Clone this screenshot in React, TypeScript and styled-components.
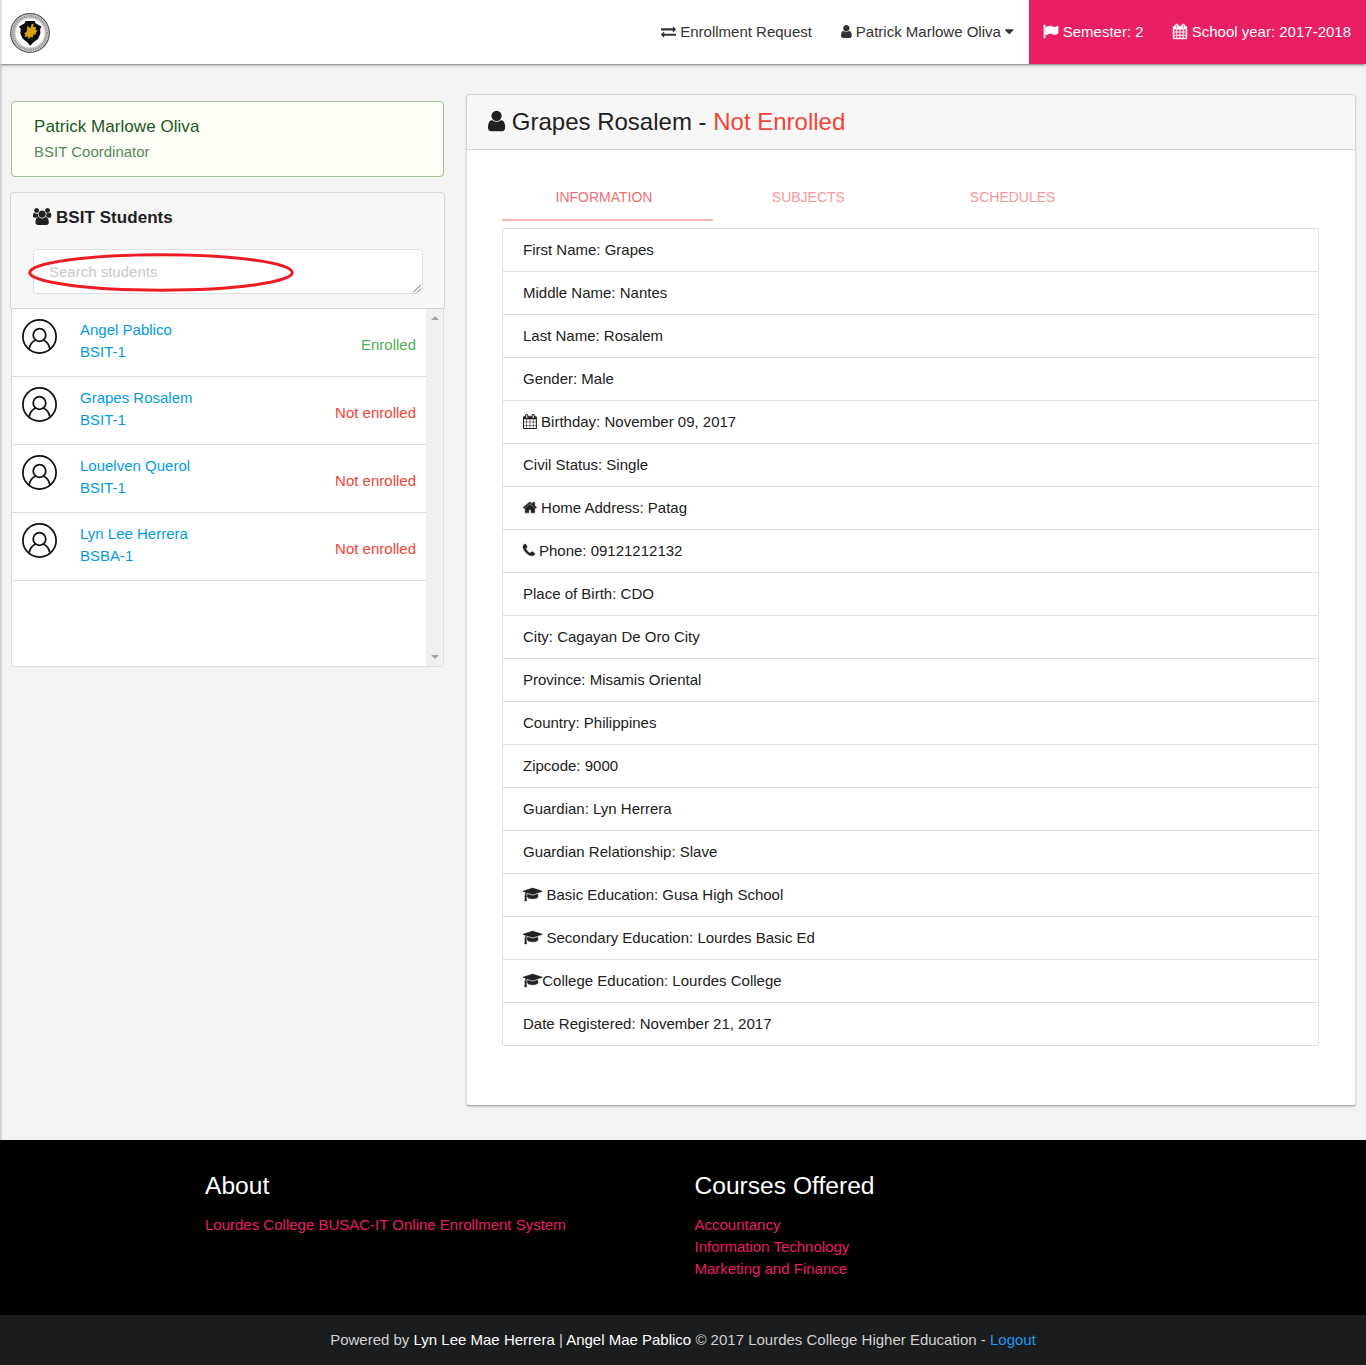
import React from 'react';
import styled, { createGlobalStyle } from 'styled-components';

const GlobalStyle = createGlobalStyle`
  *, *::before, *::after { box-sizing: border-box; }
  body {
    margin: 0;
    background: #f3f3f3;
    color: #212121;
    font: 15px/22px Arial, "Liberation Sans", sans-serif;
  }
  a { text-decoration: none; color: inherit; }
  h1, h2, h3, p, ul { margin: 0; padding: 0; font-weight: 400; }
  ul { list-style: none; }
`;

type IconName = 'user' | 'users' | 'home' | 'phone' | 'cap' | 'caret' | 'exchange' | 'calendar' | 'flag';

/* each glyph: left edge and advance width on a 1792-unit em, then its outline */
const glyphs: Record<IconName, [number, number, string]> = {
  user: [256, 1280, 'M1536 1399q0 109-62.5 187t-150.5 78h-854q-88 0-150.5-78t-62.5-187q0-85 8.5-160.5t31.5-152 58.5-131 94-89 134.5-34.5q131 128 313 128t313-128q76 0 134.5 34.5t94 89 58.5 131 31.5 152 8.5 160.5zm-256-887q0 159-112.5 271.5t-271.5 112.5-271.5-112.5-112.5-271.5 112.5-271.5 271.5-112.5 271.5 112.5 112.5 271.5z'],
  users: [-64, 1920, 'M529 896q-162 5-265 128h-134q-82 0-138-40.5t-56-118.5q0-353 124-353 6 0 43.5 21t97.5 42.5 119 21.5q67 0 133-23-5 37-5 66 0 159 93 287zm1071 637q0 120-73 189.5t-194 69.5h-874q-121 0-194-69.5t-73-189.5q0-53 3.5-103.5t14-109 26.5-108.5 43-97.5 62-81 85.5-53.5 111.5-20q10 0 43 21.5t73 48 107 48 135 21.5 135-21.5 107-48 73-48 43-21.5q61 0 111.5 20t85.5 53.5 62 81 43 97.5 26.5 108.5 14 109 3.5 103.5zm-1024-1277q0 106-75 181t-181 75-181-75-75-181 75-181 181-75 181 75 75 181zm704 384q0 159-112.5 271.5t-271.5 112.5-271.5-112.5-112.5-271.5 112.5-271.5 271.5-112.5 271.5 112.5 112.5 271.5zm576 225q0 78-56 118.5t-138 40.5h-134q-103-123-265-128 93-128 93-287 0-29-5-66 66 23 133 23 59 0 119-21.5t97.5-42.5 43.5-21q124 0 124 353zm-128-609q0 106-75 181t-181 75-181-75-75-181 75-181 181-75 181 75 75 181z'],
  home: [64, 1664, 'M1472 992v480q0 26-19 45t-45 19h-384v-384h-256v384h-384q-26 0-45-19t-19-45v-480q0-1 .5-3t.5-3l575-474 575 474q1 2 1 6zm223-69l-62 74q-8 9-21 11h-3q-13 0-21-7l-692-577-692 577q-12 8-24 7-13-2-21-11l-62-74q-8-10-7-23.5t11-21.5l719-599q32-26 76-26t76 26l244 204v-195q0-14 9-23t23-9h192q14 0 23 9t9 23v408l219 182q10 8 11 21.5t-7 23.5z'],
  phone: [192, 1408, 'M1600 1240q0 27-10 70.5t-21 68.5q-21 50-122 106-94 51-186 51-27 0-53-3.5t-57.5-12.5-47-14.5-55.5-20.5-49-18q-98-35-175-83-127-79-264-216t-216-264q-48-77-83-175-3-9-18-49t-20.5-55.5-14.5-47-12.5-57.5-3.5-53q0-92 51-186 56-101 106-122 25-11 68.5-21t70.5-10q14 0 21 3 18 6 53 76 11 19 30 54t35 63.5 31 53.5q3 4 17.5 25t21.5 35.5 7 28.5q0 20-28.5 50t-62 55-62 53-28.5 46q0 9 5 22.5t8.5 20.5 14 24 11.5 19q76 137 174 235t235 174q2 1 19 11.5t24 14 20.5 8.5 22.5 5q18 0 46-28.5t53-62 55-62 50-28.5q14 0 28.5 7t35.5 21.5 25 17.5q25 15 53.5 31t63.5 35 54 30q70 35 76 53 3 7 3 21z'],
  cap: [0, 2304, 'M1774 836l18 316q4 69-82 128t-235 93.5-323 34.5-323-34.5-235-93.5-82-128l18-316 574 181q22 7 48 7t48-7zm530-324q0 23-22 31l-1120 352q-4 1-10 1t-10-1l-652-206q-43 34-71 111.5t-34 178.5q63 36 63 109 0 69-58 107l58 433q2 14-8 25-9 11-24 11h-192q-15 0-24-11-10-11-8-25l58-433q-58-38-58-107 0-73 65-111 11-207 98-330l-333-104q-22-8-22-31t22-31l1120-352q4-1 10-1t10 1l1120 352q22 8 22 31z'],
  caret: [384, 1024, 'M1408 704q0 26-19 45l-448 448q-19 19-45 19t-45-19l-448-448q-19-19-19-45t19-45 45-19h896q26 0 45 19t19 45z'],
  exchange: [0, 1792, 'M1792 1184v192q0 13-9.5 22.5t-22.5 9.5h-1376v192q0 13-9.5 22.5t-22.5 9.5q-12 0-24-10l-319-320q-9-9-9-22 0-14 9-23l320-320q9-9 23-9 13 0 22.5 9.5t9.5 22.5v192h1376q13 0 22.5 9.5t9.5 22.5zm0-544q0 14-9 23l-320 320q-9 9-23 9-13 0-22.5-9.5t-9.5-22.5v-192h-1376q-13 0-22.5-9.5t-9.5-22.5v-192q0-13 9.5-22.5t22.5-9.5h1376v-192q0-14 9-23t23-9q12 0 24 10l319 319q9 9 9 23z'],
  calendar: [64, 1664, 'M192 1664h288v-288h-288v288zm352 0h320v-288h-320v288zm-352-352h288v-320h-288v320zm352 0h320v-320h-320v320zm-352-384h288v-288h-288v288zm736 736h320v-288h-320v288zm-384-736h320v-288h-320v288zm768 736h288v-288h-288v288zm-384-352h320v-320h-320v320zm-352-864v-288q0-13-9.5-22.5t-22.5-9.5h-64q-13 0-22.5 9.5t-9.5 22.5v288q0 13 9.5 22.5t22.5 9.5h64q13 0 22.5-9.5t9.5-22.5zm736 864h288v-320h-288v320zm-384-384h320v-288h-320v288zm384 0h288v-288h-288v288zm32-480v-288q0-13-9.5-22.5t-22.5-9.5h-64q-13 0-22.5 9.5t-9.5 22.5v288q0 13 9.5 22.5t22.5 9.5h64q13 0 22.5-9.5t9.5-22.5zm384-64v1280q0 52-38 90t-90 38h-1408q-52 0-90-38t-38-90v-1280q0-52 38-90t90-38h128v-96q0-66 47-113t113-47h64q66 0 113 47t47 113v96h384v-96q0-66 47-113t113-47h64q66 0 113 47t47 113v96h128q52 0 90 38t38 90z'],
  flag: [0, 1792, 'M320 256q0 72-64 110v1266q0 13-9.5 22.5t-22.5 9.5h-64q-13 0-22.5-9.5t-9.5-22.5v-1266q-64-38-64-110 0-53 37.5-90.5t90.5-37.5 90.5 37.5 37.5 90.5zm1472 64v763q0 25-12.5 38.5t-39.5 27.5q-215 116-369 116-61 0-123.5-22t-108.5-48-115.5-48-142.5-22q-192 0-464 146-17 9-33 9-26 0-45-19t-19-45v-742q0-32 31-55 21-14 79-43 236-120 421-120 107 0 200 29t219 88q38 19 88 19 54 0 117.5-21t110-47 88-47 54.5-21q26 0 45 19t19 45z'],
};

const Glyph = styled.svg<{ $em: number; $weight: number }>`
  width: ${p => p.$em}em;
  height: 1em;
  fill: currentColor;
  stroke: currentColor;
  stroke-width: ${p => p.$weight};
  vertical-align: -0.143em;
  overflow: visible;
`;

const Icon = ({ name, weight = 0 }: { name: IconName; weight?: number }) => {
  const [left, advance, d] = glyphs[name];
  return (
    <Glyph $em={advance / 1792} $weight={weight} viewBox={`${left} 0 ${advance} 1792`} aria-hidden="true">
      <path d={d} />
    </Glyph>
  );
};

const Page = styled.div`
  position: relative;
  width: 1366px;
  height: 1365px;
  display: flex;
  flex-direction: column;
  overflow: hidden;
`;

const EdgeShade = styled.div`
  position: absolute;
  z-index: 3;
  left: 0;
  top: 0;
  width: 3px;
  height: 1140px;
  background: linear-gradient(to right, rgba(0, 0, 0, 0.16), rgba(0, 0, 0, 0));
`;

const TopBar = styled.header`
  position: relative;
  z-index: 2;
  flex: none;
  height: 64px;
  padding-left: 10px;
  display: flex;
  align-items: center;
  justify-content: space-between;
  background: #fff;
  box-shadow: 0 2px 2px 0 rgba(0, 0, 0, 0.14), 0 1px 5px 0 rgba(0, 0, 0, 0.12), 0 3px 1px -2px rgba(0, 0, 0, 0.2);
`;

const Menu = styled.nav`
  display: flex;
  height: 64px;
  line-height: 64px;
  color: #333;
`;

const MenuItem = styled.a<{ $accent?: boolean; $tight?: boolean }>`
  padding: 0 ${p => (p.$tight ? 14 : 15)}px 0 15px;
  white-space: nowrap;
  background: ${p => (p.$accent ? '#e91e63' : 'transparent')};
  color: ${p => (p.$accent ? '#fff' : '#333')};

  svg:first-child {
    margin-left: ${p => (p.$accent ? '-0.6px' : '0')};
    margin-right: ${p => (p.$accent ? '0.6px' : '0')};
  }
`;

const Content = styled.main`
  flex: none;
  height: 1076px;
  padding: 30px 10px 0;
  display: flex;
  align-items: flex-start;
  justify-content: space-between;
`;

const Sidebar = styled.aside`
  width: 435px;
  padding-top: 7px;
`;

const Callout = styled.section`
  height: 76px;
  margin: 0 1px 15px;
  padding: 14px 22px 0;
  border: 1px solid #a3c293;
  border-radius: 4px;
  background: #fcfff5;
`;

const CalloutName = styled.h2`
  font-size: 17px;
  letter-spacing: 0.05px;
  line-height: 22px;
  color: #1e561f;
`;

const CalloutRole = styled.p`
  margin-top: 3px;
  line-height: 22px;
  color: #5a875c;
`;

const PanelHead = styled.section`
  position: relative;
  height: 117px;
  padding: 13px 22px 0;
  border: 1px solid #d4d4d5;
  border-radius: 4px 4px 0 0;
  background: #f7f7f7;
`;

const PanelTitle = styled.h2`
  font-size: 17px;
  line-height: 24px;
  font-weight: 700;
  letter-spacing: 0.05px;
`;

const SearchWrap = styled.div`
  position: relative;
  margin-top: 19px;
  height: 45px;
  width: 390px;
`;

const Search = styled.textarea`
  display: block;
  width: 100%;
  height: 100%;
  padding: 11px 15px;
  border: 1px solid #dededf;
  border-radius: 4px;
  background: #fff;
  font: inherit;
  resize: none;
  overflow: hidden;
  &::placeholder { color: #c7c7c7; opacity: 1; }
`;

const Grip = styled.svg`
  position: absolute;
  right: 1px;
  bottom: 1px;
  width: 9px;
  height: 9px;
`;

const Marker = styled.svg`
  position: absolute;
  left: 16.5px;
  top: 59.5px;
  width: 266px;
  height: 39px;
`;

const ListFrame = styled.div`
  height: 358px;
  margin: 0 1px;
  border: 1px solid #dededf;
  border-top: 0;
  border-radius: 0 0 3px 3px;
  display: flex;
  background: #fff;
`;

const Students = styled.ul`
  flex: 1;
`;

const Student = styled.li`
  height: 68px;
  padding: 10px;
  display: flex;
  border-bottom: 1px solid #dcdcdc;
  color: #039be5;
`;

const Avatar = styled.svg`
  width: 35px;
  height: 35px;
  margin-right: 23px;
`;

const Status = styled.span<{ $ok: boolean }>`
  margin: 15px 0 0 auto;
  color: ${p => (p.$ok ? '#4caf50' : '#f44336')};
`;

const Scrollbar = styled.div`
  width: 17px;
  padding: 7px 0;
  display: flex;
  flex-direction: column;
  align-items: center;
  justify-content: space-between;
  background: #f0f0f0;
`;

const Arrow = styled.i<{ $down?: boolean }>`
  border: 4px solid transparent;
  border-width: ${p => (p.$down ? '4px 4px 0' : '0 4px 4px')};
  border-${p => (p.$down ? 'top' : 'bottom')}-color: #a3a3a3;
`;

const Card = styled.section`
  width: 890px;
  height: 1012px;
  display: flex;
  flex-direction: column;
  border: 1px solid #dcdcdc;
  border-width: 0 1px 1px;
  border-bottom-color: #a9a9a9;
  border-radius: 4px 4px 3px 3px;
  background: #fff;
  box-shadow: 0 1px 2px rgba(0, 0, 0, 0.16);
`;

const CardHead = styled.header`
  height: 56px;
  margin: 0 -1px;
  padding: 13px 20px 0 21px;
  border: 1px solid #d4d4d5;
  border-radius: 4px 4px 0 0;
  background: #f7f7f7;
`;

const CardTitle = styled.h1`
  font-size: 24px;
  line-height: 28px;
`;

const Danger = styled.span`
  color: #f44336;
`;

const CardBody = styled.div`
  width: 817px;
  margin: 23px 0 0 35px;
`;

const Tabs = styled.div`
  display: grid;
  grid-template-columns: repeat(4, minmax(0, 1fr));
  height: 48px;
  margin-bottom: 7px;
`;

const Tab = styled.a<{ $active?: boolean }>`
  width: ${p => (p.$active ? '211px' : 'auto')};
  height: 48px;
  padding-right: ${p => (p.$active ? '7px' : '0')};
  border-bottom: 2px solid ${p => (p.$active ? '#f6b2b5' : 'transparent')};
  text-align: center;
  font-size: 14px;
  line-height: 48px;
  color: ${p => (p.$active ? '#ee6e73' : '#f3989b')};
`;

const Details = styled.ul`
  border: 1px solid #e0e0e0;
  border-radius: 2px;
`;

const Detail = styled.li`
  height: 43px;
  padding: 10px 20px;
  line-height: 22px;
  border-bottom: 1px solid #e0e0e0;
  &:last-child { height: 42px; border-bottom: 0; }
`;

const FooterMain = styled.footer`
  flex: none;
  height: 175px;
  padding: 30px 0 0 205px;
  display: grid;
  grid-template-columns: 489.5px 1fr;
  align-content: start;
  background: #000;
`;

const FooterTitle = styled.h3`
  margin-bottom: 13px;
  font-size: 24.6px;
  line-height: 31px;
  color: #fff;
`;

const FooterLinks = styled.ul`
  color: #e91e63;
`;

const Legal = styled.div`
  flex: none;
  height: 50px;
  line-height: 50px;
  text-align: center;
  background: #1b1c1d;
  color: #d1d1d1;
`;

const Credit = styled.b`
  font-weight: 400;
  color: #fff;
`;

const Logout = styled.a`
  color: #2196f3;
`;

const Crest = styled.svg`
  width: 40px;
  height: 40px;
  margin-top: 2px;
`;

const Logo = () => (
  <Crest viewBox="0 0 40 40" aria-hidden="true">
    <circle cx="20" cy="20" r="19.3" fill="#d6d6d6" stroke="#555" strokeWidth="1.2" />
    <circle cx="20" cy="20" r="16.8" fill="none" stroke="#8f8f8f" strokeWidth="2.4" strokeDasharray="1.3 .9" />
    <circle cx="20" cy="20" r="15" fill="#fff" stroke="#b5b5b5" strokeWidth=".6" />
    <path d="M15.6 8h9l1.2 2.4 5.6 3-1.2 2.6.2 4.4-2.2 5.4-4.6 3.4-3.3 3.6-3.4-3.8-4.2-3.2-2.4-5.4.4-4.4L9 13.4l5.4-3z" fill="#090909" />
    <path d="M17.6 12.6l2.7 3 1.4-4.6 1.8-.6-.2 3.6 3 .2-.8 2.4 2.2 1.4-1.9 1.2.6 2-2.8.4-1 2.9-1.9-.8-2.2 2.6-.6-2.8-3.7.6 1.4-2.4-1.6-1.4 2.6-1.2z" fill="#d9a20b" />
  </Crest>
);

const StudentAvatar = () => (
  <Avatar viewBox="0 0 35 35" fill="none" stroke="#111" strokeWidth="1.75" aria-hidden="true">
    <circle cx="17.5" cy="17.5" r="16.6" />
    <circle cx="17.5" cy="16" r="6.3" />
    <path d="M7 30.3c.8-4.6 3.2-7.9 6.9-9.3M28 30.3c-.8-4.6-3.2-7.9-6.9-9.3" />
  </Avatar>
);

const students = [
  { name: 'Angel Pablico', course: 'BSIT-1', enrolled: true },
  { name: 'Grapes Rosalem', course: 'BSIT-1', enrolled: false },
  { name: 'Louelven Querol', course: 'BSIT-1', enrolled: false },
  { name: 'Lyn Lee Herrera', course: 'BSBA-1', enrolled: false },
];

const details: { text: string; icon?: IconName }[] = [
  { text: 'First Name: Grapes' },
  { text: 'Middle Name: Nantes' },
  { text: 'Last Name: Rosalem' },
  { text: 'Gender: Male' },
  { icon: 'calendar', text: ' Birthday: November 09, 2017' },
  { text: 'Civil Status: Single' },
  { icon: 'home', text: ' Home Address: Patag' },
  { icon: 'phone', text: ' Phone: 09121212132' },
  { text: 'Place of Birth: CDO' },
  { text: 'City: Cagayan De Oro City' },
  { text: 'Province: Misamis Oriental' },
  { text: 'Country: Philippines' },
  { text: 'Zipcode: 9000' },
  { text: 'Guardian: Lyn Herrera' },
  { text: 'Guardian Relationship: Slave' },
  { icon: 'cap', text: ' Basic Education: Gusa High School' },
  { icon: 'cap', text: ' Secondary Education: Lourdes Basic Ed' },
  { icon: 'cap', text: 'College Education: Lourdes College' },
  { text: 'Date Registered: November 21, 2017' },
];

export default function App() {
  return (
    <Page>
      <GlobalStyle />
      <EdgeShade />
      <TopBar>
        <Logo />
        <Menu>
          <MenuItem $tight><Icon name="exchange" /> Enrollment Request</MenuItem>
          <MenuItem><Icon name="user" /> Patrick Marlowe Oliva <Icon name="caret" /></MenuItem>
          <MenuItem $accent><Icon name="flag" weight={80} /> Semester: 2</MenuItem>
          <MenuItem $accent><Icon name="calendar" weight={50} /> School year: 2017-2018</MenuItem>
        </Menu>
      </TopBar>

      <Content>
        <Sidebar>
          <Callout>
            <CalloutName>Patrick Marlowe Oliva</CalloutName>
            <CalloutRole>BSIT Coordinator</CalloutRole>
          </Callout>
          <PanelHead>
            <PanelTitle><Icon name="users" /> BSIT Students</PanelTitle>
            <SearchWrap>
              <Search placeholder="Search students" rows={1} />
              <Grip viewBox="0 0 9 9" stroke="#666" fill="none">
                <path d="M0 8.5L8 .5M4 8.5L8 4.5" />
              </Grip>
            </SearchWrap>
            <Marker viewBox="0 0 266 39" fill="none" stroke="#ed1c24" strokeWidth="3">
              <ellipse cx="133" cy="19.5" rx="131.3" ry="17.7" />
            </Marker>
          </PanelHead>
          <ListFrame>
            <Students>
              {students.map(s => (
                <Student key={s.name}>
                  <StudentAvatar />
                  <div>
                    <div>{s.name}</div>
                    <div>{s.course}</div>
                  </div>
                  <Status $ok={s.enrolled}>{s.enrolled ? 'Enrolled' : 'Not enrolled'}</Status>
                </Student>
              ))}
            </Students>
            <Scrollbar>
              <Arrow />
              <Arrow $down />
            </Scrollbar>
          </ListFrame>
        </Sidebar>

        <Card>
          <CardHead>
            <CardTitle><Icon name="user" /> Grapes Rosalem - <Danger>Not Enrolled</Danger></CardTitle>
          </CardHead>
          <CardBody>
            <Tabs>
              <Tab $active>INFORMATION</Tab>
              <Tab>SUBJECTS</Tab>
              <Tab>SCHEDULES</Tab>
            </Tabs>
            <Details>
              {details.map(d => (
                <Detail key={d.text}>
                  {d.icon && <Icon name={d.icon} weight={d.icon === 'calendar' ? 0 : 50} />}
                  {d.text}
                </Detail>
              ))}
            </Details>
          </CardBody>
        </Card>
      </Content>

      <FooterMain>
        <div>
          <FooterTitle>About</FooterTitle>
          <FooterLinks><li>Lourdes College BUSAC-IT Online Enrollment System</li></FooterLinks>
        </div>
        <div>
          <FooterTitle>Courses Offered</FooterTitle>
          <FooterLinks>
            <li>Accountancy</li>
            <li>Information Technology</li>
            <li>Marketing and Finance</li>
          </FooterLinks>
        </div>
      </FooterMain>
      <Legal>
        Powered by <Credit>Lyn Lee Mae Herrera</Credit> | <Credit>Angel Mae Pablico</Credit> © 2017 Lourdes College Higher Education - <Logout>Logout</Logout>
      </Legal>
    </Page>
  );
}
